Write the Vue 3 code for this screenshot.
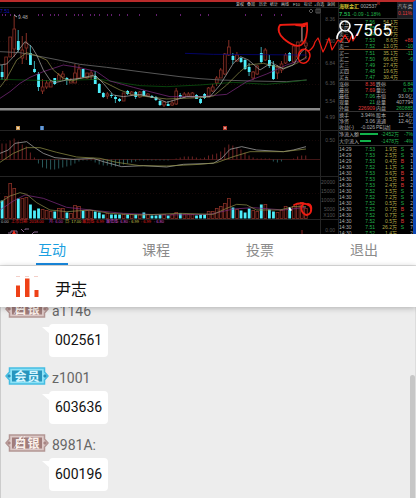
<script setup>
const kinds = 'crrrcrrccc' + 'rrrcrrcrrr' + 'crrccc' + 'rcccrcrcrcrccc' + 'rcrrcrrrccc' + 'rrrrrrcrcccrrcrccrrrcrrrr'
// body top, body bottom, high, low
const candles = [
  [72, 77, 65, 80], [57, 80, 57, 80], [37, 57, 37, 57], [29, 49, 16, 57], [41, 50, 30, 52], [50, 58, 36, 64],
  [43, 48, 33, 60], [53, 65, 45, 65], [69, 72, 61, 73], [74, 87, 72, 91], [87, 91, 79, 94], [83, 87, 80, 89],
  [82, 87, 80, 87], [78, 84, 78, 85], [75, 81, 73, 81], [74, 77, 71, 81], [78, 80, 77, 85], [80, 83, 78, 83],
  [73, 83, 64, 83], [69, 78, 65, 78], [69, 77, 69, 78], [73, 78, 73, 79], [73, 75, 70, 80], [76, 84, 71, 84],
  [84, 93, 83, 93], [93, 97, 92, 98], [94, 96, 92, 99], [95, 96, 93, 98], [97, 99, 95, 103], [99, 101, 98, 102],
  [93, 101, 93, 101], [91, 94, 90, 95], [92, 95, 91, 96], [92, 97, 91, 99], [92, 97, 91, 98], [91, 96, 90, 96],
  [94, 96, 93, 97], [96, 98, 95, 98], [97, 100, 96, 101], [101, 105, 100, 106], [102, 105, 101, 107],
  [104, 106, 101, 106], [103, 105, 100, 106], [91, 104, 88, 105], [95, 97, 93, 98], [94, 97, 92, 98],
  [94, 96, 92, 97], [93, 97, 92, 97], [95, 99, 94, 99], [99, 103, 98, 104], [94, 98, 93, 99], [88, 97, 87, 97],
  [87, 91, 84, 92], [78, 83, 76, 86], [70, 78, 68, 78], [54, 74, 53, 75], [47, 55, 40, 56], [56, 60, 53, 64],
  [55, 61, 52, 62], [58, 62, 57, 63], [60, 69, 59, 70], [67, 72, 63, 76], [72, 78, 71, 80], [66, 74, 65, 75],
  [53, 62, 47, 63], [50, 60, 48, 61], [60, 66, 55, 68], [65, 79, 61, 80], [67, 73, 65, 79], [64, 70, 61, 73],
  [55, 63, 53, 64], [53, 61, 52, 62], [46, 62, 44, 63], [42, 57, 42, 57], [41, 42, 24, 42], [43, 46, 40, 58],
]
const volumes = [18, 22, 35, 30, 20, 20, 21, 14, 8, 10, 9, 8, 7, 7, 10, 10, 6, 5, 13, 12, 8, 8, 8, 7, 6, 4, 5, 4, 4, 4, 4, 4, 4, 4, 4, 6, 4, 3, 3, 4, 4, 3, 4, 6, 5, 4, 4, 4, 3, 4, 4, 7, 7, 10, 12, 15, 20, 11, 9, 8, 6, 10, 8, 7, 14, 14, 9, 7, 6, 8, 12, 11, 12, 14, 16, 10]
const macd = [16, 16, 19, 21, 18, 15, 13, 7, 2, -4, -8, -9, -10, -10, -9, -8, -7, -6, -4, -2, -1, -1, -1, -3, -5, -6, -6, -7, -7, -6, -5, -4, -3, -2, -1, -1, -1, -1, -1, -1, -1, -1, 0, 1, 2, 3, 3, 3, 2, 1, 2, 4, 5, 6, 8, 12, 15, 14, 12, 10, 7, 4, 2, 1, 1, 1, 1, -2, -3, -2, 0, 0, 1, 3, 4, 4]
const bars = candles.map(([top, bottom, high, low], i) => ({
  x: 2 + 4.05 * i, top, bottom, high, low, kind: kinds[i] === 'c' ? 'down' : 'up', vol: volumes[i], macd: macd[i],
}))

const lines = [
  ['#777', '0,155 60,158 150,175 240,193 320,202 420,215 540,230 600,236 660,240 750,243 860,245 920,240'],
  ['#0b5a10', '0,238 150,242 300,238 360,248 420,257 500,260 600,255 700,247 800,253 860,247 920,240'],
  ['#06068c', '555,160 640,163 920,165'],
  ['#7d2a80', '0,295 30,275 60,250 90,232 130,215 190,195 240,203 290,215 330,243 400,262 450,275 510,290 600,290 680,283 740,245 800,222 860,195 920,175'],
  ['#8b8b48', '0,262 20,235 50,180 80,158 110,167 140,180 160,210 190,235 215,243 240,235 280,230 310,245 360,270 400,285 500,297 600,293 640,288 680,255 720,215 745,195 790,190 850,205 890,190 920,170'],
  ['#a5a5a5', '0,195 20,192 45,165 75,125 95,140 110,165 130,210 150,240 165,248 200,240 240,235 285,225 310,250 340,285 370,290 420,283 470,295 500,307 560,290 630,290 660,255 700,190 722,170 745,180 780,210 815,188 850,207 880,195 905,155 920,143'],
  ['#aaa', '0,460 25,450 45,430 80,425 100,440 130,460 165,473 220,478 280,475 310,485 365,500 430,497 500,501 550,493 640,490 665,475 690,448 725,440 770,450 850,455 880,450 918,440'],
  ['#8f8f45', '0,487 40,460 80,443 120,443 170,457 230,471 300,475 350,487 420,497 500,498 600,493 650,488 700,470 750,455 850,455 918,447'],
  ['#7d2a80', '0,630 40,603 75,585 130,595 200,622 290,632 370,640 500,645 630,643 700,627 760,623 850,630 918,622'],
  ['#8b8b48', '0,607 30,588 60,578 80,583 110,608 150,630 200,635 270,630 330,640 420,645 540,640 640,643 680,625 710,613 740,615 770,630 840,630 880,620 918,620'],
]
const axis = [[21, '8.36'], [43, '7.60'], [65, '6.84'], [85, '6.36'], [103, '5.54'], [119, '4.99'], [142, '0.50'], [184, '20000'], [193, '15000'], [202, '10000'], [211, '5000'], [217, 'X100'], [232, '0.00']]
const dots = [2, 5, 10, 14, 19, 38, 42, 50, 54, 58, 66, 74, 78, 82, 90, 94, 99, 107, 111, 119, 127, 139, 156, 180, 200, 208, 245, 261, 274, 281]
const menu = [[236, '复权'], [247, '叠加'], [259, '历史'], [270, '统计'], [281, '画线'], [293, 'F10'], [304, '标记'], [314, '+自选'], [327, '返回']]
const legend = [
  [1, '#bbb', '0.00'], [11, '#e02020', '上市日期: 2018.00'], [49, '#c040c0', '月: 6.00'], [65, '#c8c850', '日: 17.00'],
  [82, '#e02020', '最高线: 6.99'], [106, '#d050d0', '最低线: 6.80'], [129, '#c8c850', ': 6.99'], [141, '#e02020', ': 6.99'], [154, '#d050d0', ': 6.80'],
]

const sells = [['卖五', '7.56', '54.1万', ''], ['卖四', '7.55', '28.7万', ''], ['卖三', '7.54', '8.7万', ''], ['卖二', '7.53', '8.6万', '+86'], ['卖一', '7.52', '13.0万', '-10']]
const buys = [['买一', '7.51', '35.1万', '-11'], ['买二', '7.50', '66.6万', '-6'], ['买三', '7.49', '27.4万', ''], ['买四', '7.48', '19.6万', ''], ['买五', '7.47', '30.4万', '']]
const stats = [
  ['涨停', '8.36', 'red', '跌停', '6.84', 'green'], ['最高', '7.69', 'red', '量比', '0.79', 'green'],
  ['最低', '7.06', 'green', '市值', '93.0亿', ''], ['现量', '21', 'green', '总量', '407794', ''],
  ['外盘', '226909', 'red', '内盘', '260885', 'green'],
]
const basics = [['换手', '3.94%', '', '股本', '12.4亿', ''], ['净资', '3.06', '', '流通', '12.4亿', ''], ['收益(-)', '-0.026', '', 'PE[动]', '—', '']]
const flows = [['净流入额', 18, '-2452万', '-7%'], ['大宗流入', 11, '-1478万', '-4%']]
const ticks = [
  ['14:29', '7.53', '1.9万', 'S', '4'], ['14:29', '7.53', '2.5万', 'S', '3'], ['14:29', '7.53', '0.4万', 'B', '1'],
  ['14:30', '7.52', '1.1万', 'S', '1'], ['14:30', '7.53', '3.6万', 'B', '2'], ['14:30', '7.53', '0.5万', 'B', '1'],
  ['14:30', '7.53', '2.4万', 'B', '2'], ['14:30', '7.52', '1.5万', 'S', '1'], ['14:30', '7.52', '7.2万', 'S', '7'],
  ['14:30', '7.52', '0.5万', 'S', '2'], ['14:30', '7.52', '0.7万', 'B', '2'], ['14:30', '7.52', '0.7万', 'S', '4'],
  ['14:30', '7.52', '0.5万', 'B', '2'], ['14:30', '7.51', '26.2万', 'S', '7'], ['14:30', '7.52', '1.4万', '', '2'],
]

const tabs = ['互动', '课程', '投票', '退出']
const messages = [
  { level: '白银', tier: 'silver', user: 'a1146', text: '002561' },
  { level: '会员', tier: 'member', user: 'z1001', text: '603636' },
  { level: '白银', tier: 'silver', user: '8981A:', text: '600196' },
]
</script>

<template>
  <div class="page">
    <section class="video">
      <svg class="chart" viewBox="0 0 338 232" preserveAspectRatio="none">
        <g transform="translate(0 -2)">
          <path d="M0 7.500H338M0 130.500H338M0 176.500H338M0 219.500H338M320.500 8V234" stroke="#242424" fill="none" />
          <path d="M0 159.500H320" stroke="#401616" fill="none" />
          <path d="M0 41.500H320M0 63.500H320M0 84.500H320M0 140.500H320M0 193.500H320" stroke="#160808" stroke-dasharray="1 2" fill="none" />
          <text x="0" y="13" font-size="5" fill="#1010c0">7.51</text>
          <text v-for="m in menu" :key="m[1]" :x="m[0]" y="6" font-size="4" fill="#c4c4c4">{{ m[1] }}</text>
          <rect v-for="d in dots" :key="d" :x="d" y="14" width="1" height="2" fill="#641f70" />
          <path d="M309 11l2-2 2 2-2 2zM316 9h4v4h-4zM318 9v4" stroke="#555" fill="none" />
          <g v-for="(b, i) in bars" :key="i" :class="b.kind">
            <line :x1="b.x" :x2="b.x" :y1="b.high" :y2="b.top" class="wick" />
            <line :x1="b.x" :x2="b.x" :y1="b.bottom" :y2="b.low" class="wick" />
            <rect :x="b.x - 1.300" :y="b.top" width="2.800" :height="b.bottom - b.top" class="body" />
            <rect :x="b.x - 1.300" :y="218.500 - b.vol" width="2.800" :height="b.vol" class="body" />
            <line :x1="b.x" :x2="b.x" y1="159.500" :y2="159.500 - b.macd" :class="b.macd > 0 ? 'plus' : 'minus'" />
          </g>
          <path d="M302 24V41" stroke="#999" />
          <g transform="scale(.33333)" fill="none" stroke-width="2.200">
            <polyline v-for="(l, i) in lines" :key="i" :stroke="l[0]" :points="l[1]" />
          </g>
          <path d="M14 15l3 2" stroke="#aaa" />
          <text x="18" y="19" font-size="5" fill="#aaa">9.48</text>
          <rect y="108" width="320" height="2.500" fill="#8a8a8a" />
          <rect x="16" y="126" width="4" height="4" fill="#c99650" /><path d="M17 128h2M18 127v2" stroke="#fff" stroke-width=".7" />
          <rect x="40" y="126" width="4" height="4" fill="#3b75b5" /><path d="M41 127h2M41 129h2" stroke="#cdf" stroke-width=".7" />
          <rect x="223" y="126" width="4" height="4" fill="#b83a2c" /><path d="M224 128h2" stroke="#fff" />
          <text v-for="a in axis" :key="a[1]" x="335" :y="a[0]" font-size="5" text-anchor="end" fill="#555">{{ a[1] }}</text>
          <text v-for="l in legend" :key="l[0]" :x="l[0]" y="223" font-size="4" :fill="l[1]">{{ l[2] }}</text>
          <path d="M8 233h3v-2h6v3M21 229l3 3M25 230v-1h4M32 234l2-2h4" stroke="#85648a" fill="none" />
          <path d="M12 234l2-4 2 4z" fill="#f03020" />
          <path d="M302 230v4" stroke="#902020" />
          <path d="M289 207l3 3-1 1-2-1z" fill="#fff" />
        </g>
      </svg>

      <aside class="quote">
        <header class="stock">
          <div>
            <p><b>海联金汇</b> 002537<sup>R</sup></p>
            <p class="green"><strong>7.51</strong> -0.09 -1.18%</p>
          </div>
          <div class="sector"><span>汽车类</span><span class="red">0.11%</span></div>
        </header>
        <table class="book sell">
          <tr v-for="r in sells" :key="r[0]"><td>{{ r[0] }}</td><td class="green">{{ r[1] }}</td><td class="gold">{{ r[2] }}</td><td :class="r[3][0] === '+' ? 'red' : 'green'">{{ r[3] }}</td></tr>
        </table>
        <table class="book">
          <tr v-for="r in buys" :key="r[0]"><td>{{ r[0] }}</td><td class="green">{{ r[1] }}</td><td class="gold">{{ r[2] }}</td><td class="green">{{ r[3] }}</td></tr>
        </table>
        <table v-for="(set, n) in [stats, basics]" :key="n" class="stats">
          <tr v-for="r in set" :key="r[0]"><td>{{ r[0] }}</td><td :class="r[2]">{{ r[1] }}</td><td>{{ r[3] }}</td><td :class="r[5]">{{ r[4] }}</td></tr>
        </table>
        <table class="flows">
          <tr v-for="f in flows" :key="f[0]"><td>{{ f[0] }}</td><td><i :style="{ width: f[1] + 'px' }"></i></td><td class="green">{{ f[2] }}</td><td class="green">{{ f[3] }}</td></tr>
        </table>
        <table class="ticks">
          <tr v-for="(t, i) in ticks" :key="i"><td>{{ t[0] }}</td><td class="green">{{ t[1] }}</td><td class="gold">{{ t[2] }}</td><td :class="t[3] === 'B' ? 'red' : 'green'">{{ t[3] }}</td><td>{{ t[4] }}</td></tr>
        </table>
      </aside>

      <svg class="marks" viewBox="0 0 416 234" preserveAspectRatio="none" fill="none" stroke="#ee1c12" stroke-width="1.800" stroke-linecap="round" stroke-linejoin="round">
        <path d="M306 24C300 25 291 24 280 25C277 29 279 35 284 39C290 44 297 47 301 45C306 42 308 33 307 23L303 24L302 27M296 25L305 26" />
        <path d="M301 50C306 48 310 51 310 56C309 62 304 65 300 62C297 58 298 52 302 50" stroke-width="1.500" />
        <path d="M308 51C311 50 314 46 315 42L318 38C320 42 321 47 323 52L325 48L329 38L332 50L338 40L341 42L345 35L349 42L352 35L353 41L357 34" stroke-width="1.200" />
        <path d="M294 205C299 202 306 203 310 206C313 211 310 215 306 215C301 213 300 207 303 204M308 204C311 204 312 207 311 211" />
      </svg>
      <div class="viewers">
        <svg viewBox="0 0 18 20" fill="none" stroke="#fff" stroke-width="1.600" stroke-linecap="round">
          <circle cx="9" cy="6" r="5" />
          <path d="M1 18.500C1 14 3 12 6 10.500M17 18.500C17 14 15 12 12 10.500" />
        </svg>
        <span>7565</span>
      </div>
    </section>

    <nav class="tabs">
      <button v-for="(t, i) in tabs" :key="t" type="button" :class="{ active: i === 0 }"><span>{{ t }}</span></button>
    </nav>

    <header class="host">
      <svg width="24" height="24" viewBox="0 0 24 24">
        <path d="M1 .5h4M10 .5h4M19 .5h4" stroke="#f3cfc8" />
        <path d="M1 9.500h4v11.500H1zM10 2.500h4.500V21H10zM19.500 14h4v7h-4z" fill="#ee4117" />
      </svg>
      <h1>尹志</h1>
    </header>

    <main class="chat">
      <article v-for="m in messages" :key="m.user">
        <div class="who">
          <svg :class="m.tier" width="44" height="18" viewBox="0 0 44 18">
            <path class="rim" d="M4.500 1h35v4l3.500 4-3.500 4v4h-35v-4L1 9l3.500-4z" />
            <path class="plate" d="M7 3.500h30v11H7z" />
            <path class="bolt" d="M2 9l2-2 2 2-2 2zM38 9l2-2 2 2-2 2z" />
            <text x="22.500" y="13.500" text-anchor="middle">{{ m.level }}</text>
            <path v-if="m.tier === 'silver'" class="shine" d="M9 14L17 2M12 14L20 2" />
          </svg>
          <span>{{ m.user }}</span>
        </div>
        <p class="bubble">{{ m.text }}</p>
      </article>
      <div class="thumb"></div>
    </main>
  </div>
</template>

<style>
body { margin: 0; }
</style>

<style scoped>
* { box-sizing: border-box; }
p, h1 { margin: 0; font-weight: 400; }
.page { height: 100vh; display: flex; flex-direction: column; background: #ededed; font-family: Roboto, "Noto Sans CJK SC", sans-serif; }

.video { position: relative; flex: none; display: flex; aspect-ratio: 16 / 9; overflow: hidden; background: #000; border-top: 2px solid #b92b2b; border-right: 3px solid #0b47b4; font-family: "Liberation Sans", "Noto Sans CJK SC", sans-serif; }
.chart { flex: 1; min-width: 0; height: 100%; }
.up .wick { stroke: #873026; stroke-width: 1; }
.up .body { fill: #120202; stroke: #873026; stroke-width: .8; }
.down .wick { stroke: #3ba7b0; stroke-width: 1; }
.down .body { fill: #4deefa; }
.plus { stroke: #712323; }
.minus { stroke: #28585a; }

.quote { flex: none; width: 75px; display: flex; flex-direction: column; font-size: 5px; line-height: 6px; color: #b0b0b0; white-space: nowrap; overflow: hidden; border-left: 1px solid #242424; }
.red { color: #e23c3a; }
.green { color: #22b04c; }
.gold { color: #b5ac48; }
.stock { display: flex; justify-content: space-between; height: 16px; }
.stock p { line-height: 8px; }
.stock b { color: #d0c030; }
.stock sup { color: #e03030; font-size: 4px; line-height: 0; }
.stock strong { font-size: 6px; }
.sector { display: flex; flex-direction: column; width: 16px; padding: 1px 0; line-height: 7px; text-align: center; background: #1d1d22; }
table { width: 100%; border-collapse: collapse; table-layout: fixed; border-top: 1px solid #333; }
td { padding: 0; height: 6px; text-align: right; }
td:first-child { text-align: left; }
.book td:nth-child(1), .book td:nth-child(4) { width: 15px; }
.book td:nth-child(2) { width: 21px; }
.book.sell { border-bottom: 1px solid #7a4525; }
.book.sell + .book { border-top: 0; }
.stats td:nth-child(1) { width: 17px; }
.stats td:nth-child(2) { width: 19px; }
.stats td:nth-child(3) { width: 18px; text-align: left; padding-left: 1px; }
.flows td { height: 7px; }
.flows td:nth-child(1) { width: 21px; }
.flows td:nth-child(2) { width: 19px; text-align: left; }
.flows td:nth-child(3) { width: 20px; }
.flows i { display: block; height: 2px; background: #12b24b; }
.ticks td:nth-child(1) { width: 15px; }
.ticks td:nth-child(2) { width: 21px; }
.ticks td:nth-child(4) { width: 7px; }
.ticks td:nth-child(5) { width: 9px; }

.marks { position: absolute; top: -2px; left: 0; width: calc(100% + 3px); height: calc(100% + 2px); }
.viewers { position: absolute; top: 18px; right: 21px; display: flex; align-items: center; color: #fff; font: 17px/20px Roboto, sans-serif; }
.viewers svg { width: 18px; height: 20px; }

.tabs { flex: none; display: grid; grid-template-columns: repeat(4, 1fr); background: #fff; border-bottom: 1px solid #e2e2e2; }
.tabs button { height: 31px; padding: 0; border: 0; background: none; color: #8b8b8b; font: 14px/28px "Noto Sans CJK SC", sans-serif; }
.tabs span { display: inline-block; padding: 0 2px; border-bottom: 2px solid transparent; }
.tabs .active { color: #1b9fe0; }
.tabs .active span { border-color: #1889df; }

.host { position: relative; z-index: 1; flex: none; display: flex; align-items: center; gap: 16px; height: 41px; padding: 3px 15px 0; background: #fff; box-shadow: 0 1px 6px #0004; }
.host h1 { color: #111; font: 16px/24px "Noto Sans CJK SC", sans-serif; }

.chat { position: relative; flex: 1; min-height: 0; display: flex; flex-direction: column; justify-content: flex-end; gap: 10px; padding: 0 0 7px 4px; overflow: hidden; border-left: 1px solid #ccc; border-right: 1px solid #ddd; }
.who { display: flex; align-items: center; gap: 3px; height: 18px; margin-bottom: 6px; color: #666; font-size: 14px; line-height: 18px; }
.who span { padding-top: 4px; }
.who text { font: 700 12px "Noto Sans CJK SC", sans-serif; letter-spacing: 1px; }
.rim { stroke-width: 1.5; }
.member .rim { fill: #8ce2f7; stroke: #45bde2; }
.member .plate { fill: #2795bd; }
.member .bolt { fill: #278fba; }
.member text { fill: #d6f5ff; }
.silver .rim { fill: #dcc8c6; stroke: #b39694; }
.silver .plate { fill: #a17d7b; }
.silver .bolt { fill: #a88583; }
.silver text { fill: #fbf0ea; }
.shine { stroke: #fff; stroke-opacity: .6; }
.bubble { position: relative; width: fit-content; margin-left: 44px; padding: 0 6px; color: #111; background: #fff; border-radius: 4px; font-size: 14px; line-height: 33px; }
.bubble::before { content: ""; position: absolute; top: 3px; left: -7px; width: 8px; height: 7px; background: #fff; clip-path: polygon(0 0, 100% 0, 100% 100%); }
.thumb { position: absolute; right: 0; top: 68px; bottom: 0; width: 5px; background: #c6c6c6; border-radius: 3px 3px 0 0; }
</style>
